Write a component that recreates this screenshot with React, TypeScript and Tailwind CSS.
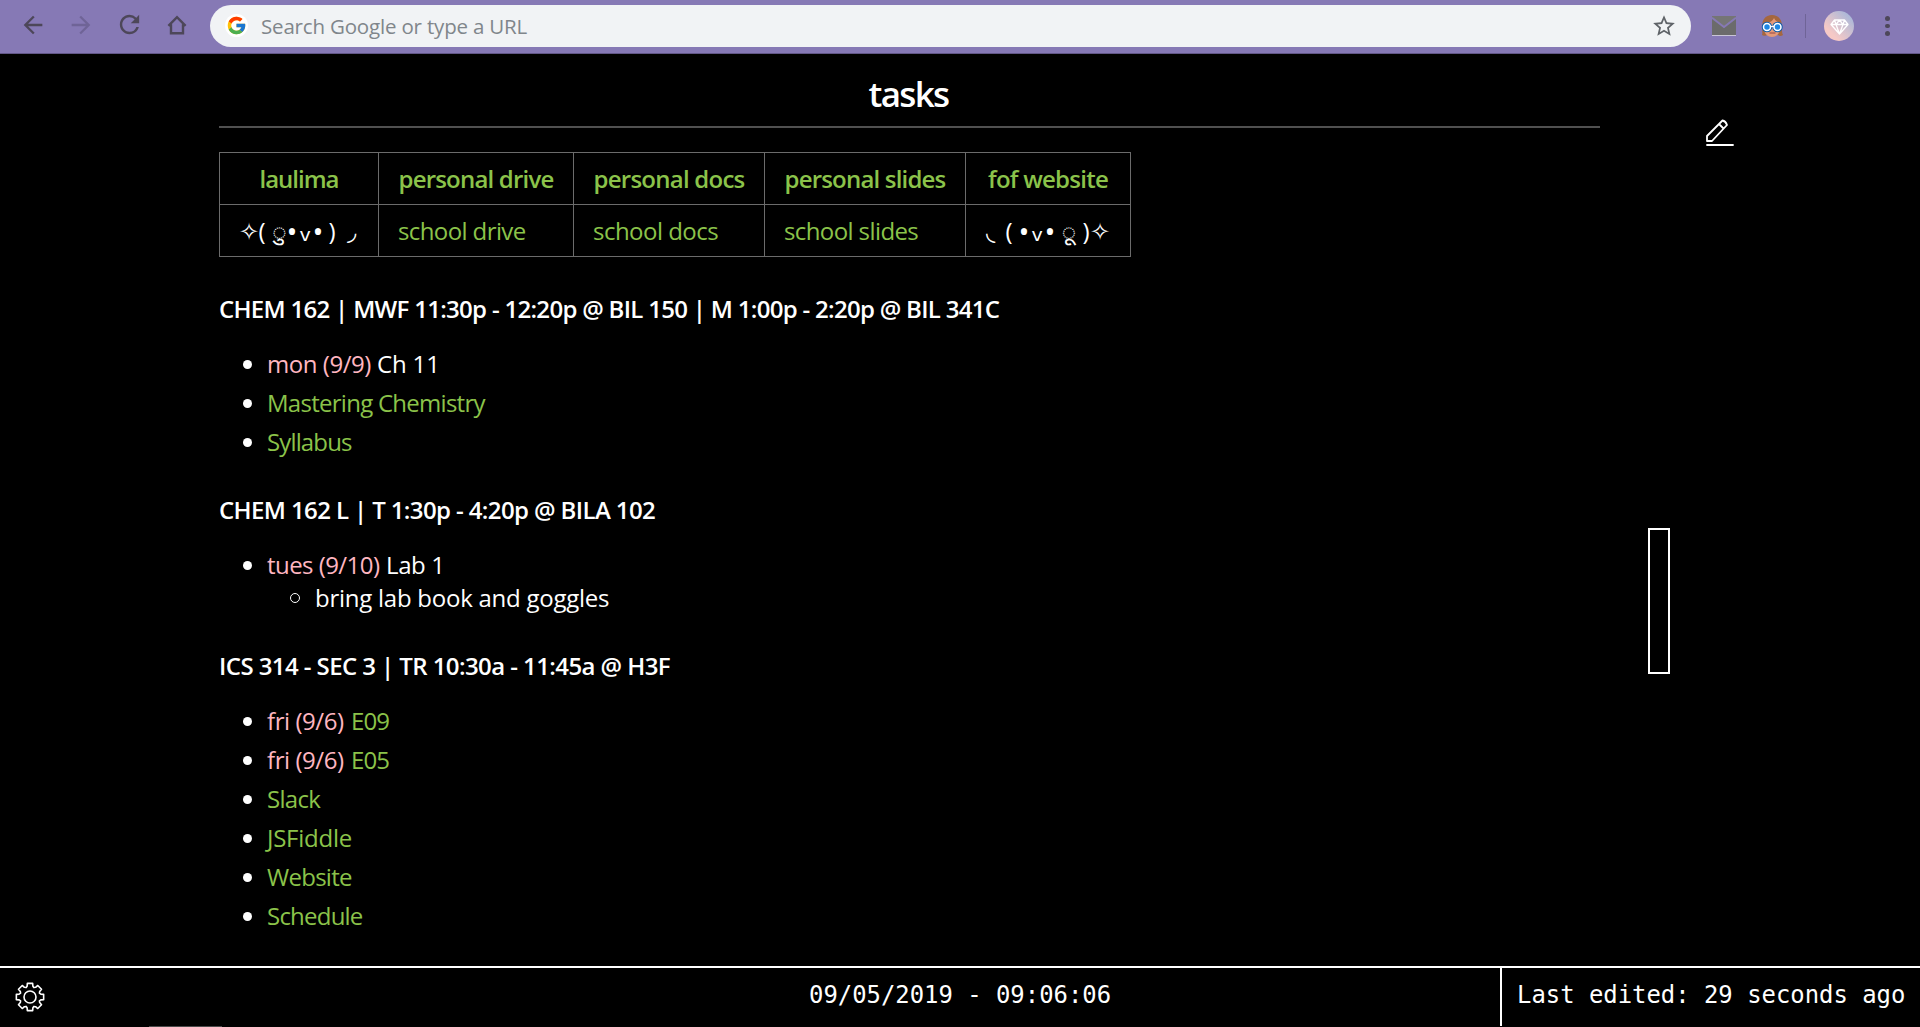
import type { ReactNode } from "react";
import { FcGoogle } from "react-icons/fc";
import { MdArrowBack, MdArrowForward, MdRefresh, MdStarBorder } from "react-icons/md";

function HomeIcon() {
  return (
    <svg className="h-5 w-5" viewBox="0 0 20 20" fill="none" stroke="#4d4759" strokeWidth="2.4">
      <path d="M1.4 10.900 10 2.200l8.600 8.700M4 9.200v9h12v-9" strokeLinejoin="miter" />
    </svg>
  );
}

function MailIcon() {
  return (
    <svg className="h-5 w-6" viewBox="0 0 24 20">
      <rect width="24" height="20" fill="#6b6b6b" />
      <path d="M0 19h24v1H0z" fill="#c9c5d6" />
      <path d="M0 0h24v1.5L12 12 0 1.5z" fill="#757575" />
      <path d="M0 1.8 12 11 24 1.8" fill="none" stroke="#8679b5" strokeWidth="1.9" />
    </svg>
  );
}

function FaceIcon() {
  return (
    <svg className="h-6 w-6" viewBox="0 0 24 24">
      <path d="M2 21C3 18 1 8 4 5 6 2 9 1 12 1s6 1 8 4c3 3 1 13 3 16-2 1.500-4 1-5 0H7c-1 1-4 1-5 0z" fill="#a5673f" />
      <path d="M4 9c5 0 9-2 10-5 1 3 4 4 6 5v5c0 6-4 9-8 9s-8-3-8-9z" fill="#e59a78" />
      <path d="M9.500 19h6" stroke="#a65a52" strokeWidth="1.300" />
      <circle cx="7" cy="13" r="4.500" fill="#1e88e5" stroke="#0d5cad" strokeWidth="1.500" />
      <circle cx="17.500" cy="13" r="4.500" fill="#1e88e5" stroke="#0d5cad" strokeWidth="1.500" />
      <circle cx="7" cy="13" r="3.500" fill="#1e88e5" stroke="#fff" strokeWidth="1.500" />
      <circle cx="17.500" cy="13" r="3.500" fill="#1e88e5" stroke="#fff" strokeWidth="1.500" />
      <path d="M10.500 12.500h3.500" stroke="#fff" strokeWidth="1.300" />
    </svg>
  );
}

function DiamondIcon() {
  return (
    <svg className="mt-0.5 h-4 w-[19px]" viewBox="0 0 19 16" fill="none" stroke="#fff" strokeWidth="1.300" strokeLinejoin="round">
      <path d="M4.500 1h10L18 5.500 9.500 15 1 5.500zM1 5.500h17M6 5.500 9.500 15 13 5.500M4.500 1 6 5.500 9.500 1 13 5.500 14.500 1" />
    </svg>
  );
}

function PencilIcon() {
  return (
    <svg className="h-7 w-7" viewBox="0 0 28 28" fill="none" stroke="#fff" strokeWidth="1.800" strokeLinejoin="round" strokeLinecap="round">
      <path d="M1 17 16.500 1.500c1.700.300 3.700 2.300 4.500 4.500L6 22H1zM13 5l4.500 4.500" />
      <path d="M1 26h26" strokeWidth="1.800" />
    </svg>
  );
}

function gearPath() {
  const profile: [number, number][] = [
    [-11, 13.9],
    [11, 13.9],
    [15, 11.2],
    [22.5, 10.2],
    [30, 11.2],
  ];
  const points: string[] = [];
  for (let tooth = 0; tooth < 8; tooth++) {
    for (const [angle, radius] of profile) {
      const a = ((tooth * 45 + angle) * Math.PI) / 180;
      points.push(`${(15 + radius * Math.cos(a)).toFixed(2)} ${(15 + radius * Math.sin(a)).toFixed(2)}`);
    }
  }
  return `M${points.join("L")}Z`;
}

function GearIcon() {
  return (
    <svg className="h-[30px] w-[30px]" viewBox="0 0 30 30" fill="none" stroke="#fff" strokeWidth="1.600" strokeLinejoin="round">
      <path d={gearPath()} />
      <circle cx="15" cy="15" r="6" />
    </svg>
  );
}

function BrowserBar() {
  return (
    <header className="flex h-[54px] items-center border-b border-[#625787] bg-[#8679b5] pb-[3px] text-[#4d4759]">
      <nav className="flex w-[210px] items-center">
        <MdArrowBack className="ml-[19px] text-[28px]" />
        <MdArrowForward className="ml-5 text-[28px] text-[#6f6497]" />
        <MdRefresh className="ml-5 text-[29px]" />
        <span className="ml-[23px]">
          <HomeIcon />
        </span>
      </nav>
      <div className="mt-0.5 flex h-[42px] w-[1481px] items-center rounded-full bg-[#f1f3f5] pr-3.5 pl-[15px]">
        <span className="flex h-[23px] w-[23px] items-center justify-center rounded-full bg-white">
          <FcGoogle className="text-[21px]" />
        </span>
        <span className="ml-[13px] grow text-[20.500px] tracking-[-0.180px] text-[#80868b]">Search Google or type a URL</span>
        <MdStarBorder className="text-[26px] text-[#5f6368]" />
      </div>
      <div className="mt-0.5 ml-[21px] flex items-center">
        <MailIcon />
        <span className="ml-6">
          <FaceIcon />
        </span>
        <span className="ml-[21px] h-6 w-px bg-[#6f6497]" />
        <span className="ml-[18px] flex h-[30px] w-[30px] items-center justify-center rounded-full bg-linear-to-tr from-[#f6c9c6] from-25% to-[#a5b6d9] to-90%">
          <DiamondIcon />
        </span>
        <span className="ml-[31px] flex flex-col gap-[3px]">
          <i className="h-[4.500px] w-[4.500px] rounded-full bg-[#4d4759]" />
          <i className="h-[4.500px] w-[4.500px] rounded-full bg-[#4d4759]" />
          <i className="h-[4.500px] w-[4.500px] rounded-full bg-[#4d4759]" />
        </span>
      </div>
    </header>
  );
}

function Link({ className, children }: { className: string; children: ReactNode }) {
  return (
    <a href="#" className={`text-[#8bc34a] ${className}`}>
      {children}
    </a>
  );
}

function HeadCell({ className, children }: { className: string; children: ReactNode }) {
  return (
    <th className="border border-[#6b6b6b] p-0 text-center font-semibold">
      <Link className={className}>{children}</Link>
    </th>
  );
}

function Cell({ children }: { children: ReactNode }) {
  return <td className="border border-[#6b6b6b] py-0 pr-0 pl-[19px] text-left">{children}</td>;
}

function Glyph({ className, children }: { className: string; children: ReactNode }) {
  return <span className={`flex shrink-0 justify-center ${className}`}>{children}</span>;
}

function LeftFace() {
  return (
    <div className="flex h-[51px]">
      <Glyph className="w-[19px]">✧</Glyph>
      <Glyph className="w-2">(</Glyph>
      <Glyph className="ml-[5px] w-[17px]">ु</Glyph>
      <Glyph className="w-2 text-[29px]">•</Glyph>
      <Glyph className="-mt-1 ml-1 w-2.5 text-[31px]">ᵥ</Glyph>
      <Glyph className="ml-1 w-2 text-[29px]">•</Glyph>
      <Glyph className="ml-1.5 w-2">)</Glyph>
      <Glyph className="ml-2.5 w-[11px]">◞</Glyph>
    </div>
  );
}

function RightFace() {
  return (
    <div className="flex h-[51px]">
      <Glyph className="w-[11px]">◟</Glyph>
      <Glyph className="ml-[9px] w-2">(</Glyph>
      <Glyph className="ml-[7px] w-2 text-[29px]">•</Glyph>
      <Glyph className="-mt-1 ml-1 w-2.5 text-[31px]">ᵥ</Glyph>
      <Glyph className="ml-1 w-2 text-[29px]">•</Glyph>
      <Glyph className="ml-1.5 w-[18px]">ू</Glyph>
      <Glyph className="ml-1 w-2">)</Glyph>
      <Glyph className="w-[19px]">✧</Glyph>
    </div>
  );
}

function LinkTable() {
  return (
    <table className="mt-6 w-[912px] table-fixed border-collapse leading-[51px] whitespace-pre">
      <colgroup>
        <col className="w-[159px]" />
        <col className="w-[195px]" />
        <col className="w-[191px]" />
        <col className="w-[201px]" />
        <col className="w-[165px]" />
      </colgroup>
      <tbody>
        <tr className="h-[52px]">
          <HeadCell className="tracking-[-1.020px]">laulima</HeadCell>
          <HeadCell className="tracking-[-0.800px]">personal drive</HeadCell>
          <HeadCell className="tracking-[-0.750px]">personal docs</HeadCell>
          <HeadCell className="tracking-[-0.810px]">personal slides</HeadCell>
          <HeadCell className="tracking-[-0.750px]">fof website</HeadCell>
        </tr>
        <tr className="h-[52px]">
          <Cell>
            <LeftFace />
          </Cell>
          <Cell>
            <Link className="tracking-[-0.600px]">school drive</Link>
          </Cell>
          <Cell>
            <Link className="tracking-[-0.520px]">school docs</Link>
          </Cell>
          <Cell>
            <Link className="tracking-[-0.600px]">school slides</Link>
          </Cell>
          <Cell>
            <RightFace />
          </Cell>
        </tr>
      </tbody>
    </table>
  );
}

function Item({ children, nested }: { children: ReactNode; nested?: ReactNode }) {
  return (
    <li>
      <div className={nested ? "flex h-9 items-start leading-[39px]" : "flex h-[39px] items-start leading-[39px]"}>
        <span className="mt-[16px] mr-[15px] ml-6 h-[9px] w-[9px] shrink-0 rounded-full bg-white" />
        <span className="whitespace-pre">{children}</span>
      </div>
      {nested}
    </li>
  );
}

function Due({ className, children }: { className: string; children: ReactNode }) {
  return <span className={`inline-block text-[#ffb6c1] ${className}`}>{children}</span>;
}

function Course({ title, children }: { title: ReactNode; children: ReactNode }) {
  return (
    <section className="mb-[33px]">
      <h2 className="h-8 leading-8 font-semibold whitespace-nowrap">{title}</h2>
      <ul className="mt-[19px]">{children}</ul>
    </section>
  );
}

export default function App() {
  return (
    <div className="flex h-[1027px] w-[1920px] flex-col overflow-hidden bg-black font-['Open_Sans','Noto_Sans',sans-serif] text-[24px] text-white">
      <BrowserBar />
      <div className="flex min-h-0 grow">
        <main className="ml-[219px] w-[1381px] overflow-hidden">
          <h1 className="h-[72px] pt-[15px] pr-0.5 text-center text-[35px] leading-[50px] font-semibold tracking-[-1.650px]">tasks</h1>
          <hr className="h-0.5 border-0 bg-[#505050]" />
          <LinkTable />
          <div className="mt-9">
            <Course title={<span className="tracking-[-0.700px]">CHEM 162 | MWF 11:30p - 12:20p @ BIL 150 | M 1:00p - 2:20p @ BIL 341C</span>}>
              <Item>
                <Due className="w-[110px] tracking-[-0.450px]">mon (9/9)</Due>
                <span className="tracking-[-0.150px]">Ch 11</span>
              </Item>
              <Item>
                <Link className="tracking-[-0.730px]">Mastering Chemistry</Link>
              </Item>
              <Item>
                <Link className="tracking-[-0.860px]">Syllabus</Link>
              </Item>
            </Course>
            <Course title={<span className="tracking-[-0.610px]">CHEM 162 L | T 1:30p - 4:20p @ BILA 102</span>}>
              <Item
                nested={
                  <div className="mb-9 ml-[71px] flex h-[33px] items-start leading-[33px]">
                    <span className="mt-3 mr-[15px] h-2.5 w-2.5 rounded-full border border-white" />
                    <span className="tracking-[-0.250px]">bring lab book and goggles</span>
                  </div>
                }
              >
                <Due className="w-[119px] tracking-[-0.550px]">tues (9/10)</Due>
                <span className="tracking-[-0.400px]">Lab 1</span>
              </Item>
            </Course>
            <Course title={<span className="tracking-[-0.580px]">ICS 314 - SEC 3 | TR 10:30a - 11:45a @ H3F</span>}>
              <Item>
                <Due className="w-[84px] tracking-[-0.440px]">fri (9/6)</Due>
                <Link className="tracking-[-0.850px]">E09</Link>
              </Item>
              <Item>
                <Due className="w-[84px] tracking-[-0.440px]">fri (9/6)</Due>
                <Link className="tracking-[-0.850px]">E05</Link>
              </Item>
              <Item>
                <Link className="tracking-[-0.700px]">Slack</Link>
              </Item>
              <Item>
                <Link className="tracking-[-0.250px]">JSFiddle</Link>
              </Item>
              <Item>
                <Link className="tracking-[-0.730px]">Website</Link>
              </Item>
              <Item>
                <Link className="tracking-[-0.780px]">Schedule</Link>
              </Item>
            </Course>
          </div>
        </main>
        <div className="mt-[474px] ml-12 h-[146px] w-[22px] border-2 border-white" />
        <div className="mt-[65.500px] ml-9">
          <PencilIcon />
        </div>
      </div>
      <footer className="grid h-[61px] shrink-0 grid-cols-[1500px_1fr] border-t-2 border-white font-['DejaVu_Sans_Mono',monospace] text-[23.900px]">
        <div className="flex items-start">
          <span className="mt-3.5 ml-[15px]">
            <GearIcon />
          </span>
          <span className="mt-[11px] ml-[764px] leading-8 whitespace-nowrap">09/05/2019 - 09:06:06</span>
        </div>
        <div className="h-[58px] border-l-2 border-white pt-[11px] pl-[15px] leading-8 whitespace-nowrap">Last edited: 29 seconds ago</div>
        <div className="col-span-2 -mt-px ml-[149px] h-px w-[73px] bg-[#4a4a4a]" />
      </footer>
    </div>
  );
}
